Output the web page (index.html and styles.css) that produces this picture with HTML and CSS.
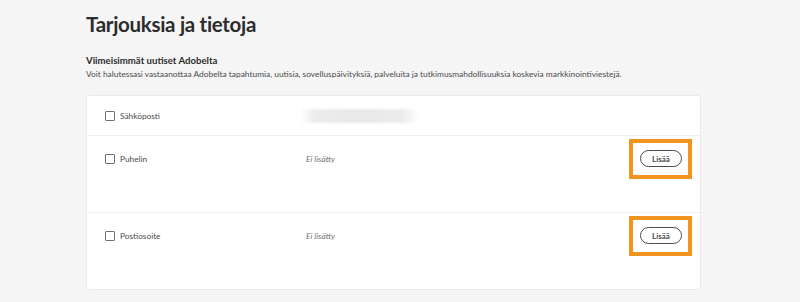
FILE: index.html
```html
<!DOCTYPE html>
<html lang="fi">
<head>
  <meta charset="UTF-8" />
  <title>Tarjouksia ja tietoja</title>
  <link rel="stylesheet" href="styles.css">
</head>
<body>
  <main class="page">
    <h1 class="title">Tarjouksia ja tietoja</h1>

    <h2 class="subtitle">Viimeisimmät uutiset Adobelta</h2>
    <p class="desc">Voit halutessasi vastaanottaa Adobelta tapahtumia, uutisia, sovelluspäivityksiä, palveluita ja tutkimusmahdollisuuksia koskevia markkinointiviestejä.</p>

    <section class="card">
      <div class="row row-short">
        <label class="check"><span class="box"></span>Sähköposti</label>
        <div class="value"><span class="blur"></span></div>
      </div>

      <div class="row row-tall">
        <label class="check"><span class="box"></span>Puhelin</label>
        <div class="value empty">Ei lisätty</div>
        <div class="action">
          <span class="mark"><button class="pill">Lisää</button></span>
        </div>
      </div>

      <div class="row row-tall last">
        <label class="check"><span class="box"></span>Postiosoite</label>
        <div class="value empty">Ei lisätty</div>
        <div class="action">
          <span class="mark"><button class="pill">Lisää</button></span>
        </div>
      </div>
    </section>
  </main>
</body>
</html>
```

FILE: styles.css
```css
body {
  margin: 0;
  background: #f5f5f5;
  font-family: Lato, 'Open Sans', sans-serif;
  color: #2c2c2c;
}

.page {
  width: 615px;
  padding: 8px 0 0 86px;
}

.title {
  margin: 0;
  font-size: 20.5px;
  font-weight: 700;
  letter-spacing: -0.3px;
  line-height: 32px;
  color: #2c2c2c;
}

.subtitle {
  margin: 14px 0 0;
  font-size: 9.6px;
  font-weight: 700;
  line-height: 14px;
  color: #2c2c2c;
}

.desc {
  margin: 0;
  font-size: 8.4px;
  line-height: 12px;
  color: #4b4b4b;
  white-space: nowrap;
}

.card {
  margin-top: 15px;
  background: #ffffff;
  border: 1px solid #eaeaea;
  border-radius: 3px;
}

.row {
  display: flex;
  align-items: flex-start;
  padding: 0 8px 0 18px;
  border-bottom: 1px solid #eeeeee;
}

.row.last {
  border-bottom: none;
}

.row-short {
  height: 39px;
  align-items: center;
}

.row-tall {
  height: 76px;
}

.check {
  display: flex;
  align-items: center;
  width: 201px;
  font-size: 8.3px;
  color: #4b4b4b;
}

.row-tall .check,
.row-tall .value {
  margin-top: 17px;
  line-height: 12px;
}

.box {
  width: 8px;
  height: 8px;
  border: 1px solid #707070;
  border-radius: 1px;
  margin-right: 5px;
}

.value {
  flex: 1;
  font-size: 8.3px;
  color: #707070;
}

.value.empty {
  font-style: italic;
}

.blur {
  display: block;
  width: 118px;
  height: 14px;
  margin-left: -6px;
  background: linear-gradient(90deg, rgba(236,236,236,0) 0%, #ececec 12%, #e9e9e9 50%, #ececec 88%, rgba(236,236,236,0) 100%);
  filter: blur(1px);
}

.action {
  margin-top: 3px;
}

.mark {
  display: inline-flex;
  padding: 7px 6px 8px 7px;
  border: 4px solid #f2931d;
}

.pill {
  width: 42px;
  height: 17px;
  padding: 0;
  border: 1.5px solid #4b4b4b;
  border-radius: 9px;
  background: #ffffff;
  font-family: Lato, 'Open Sans', sans-serif;
  font-size: 8px;
  font-weight: 700;
  color: #4b4b4b;
}
```
